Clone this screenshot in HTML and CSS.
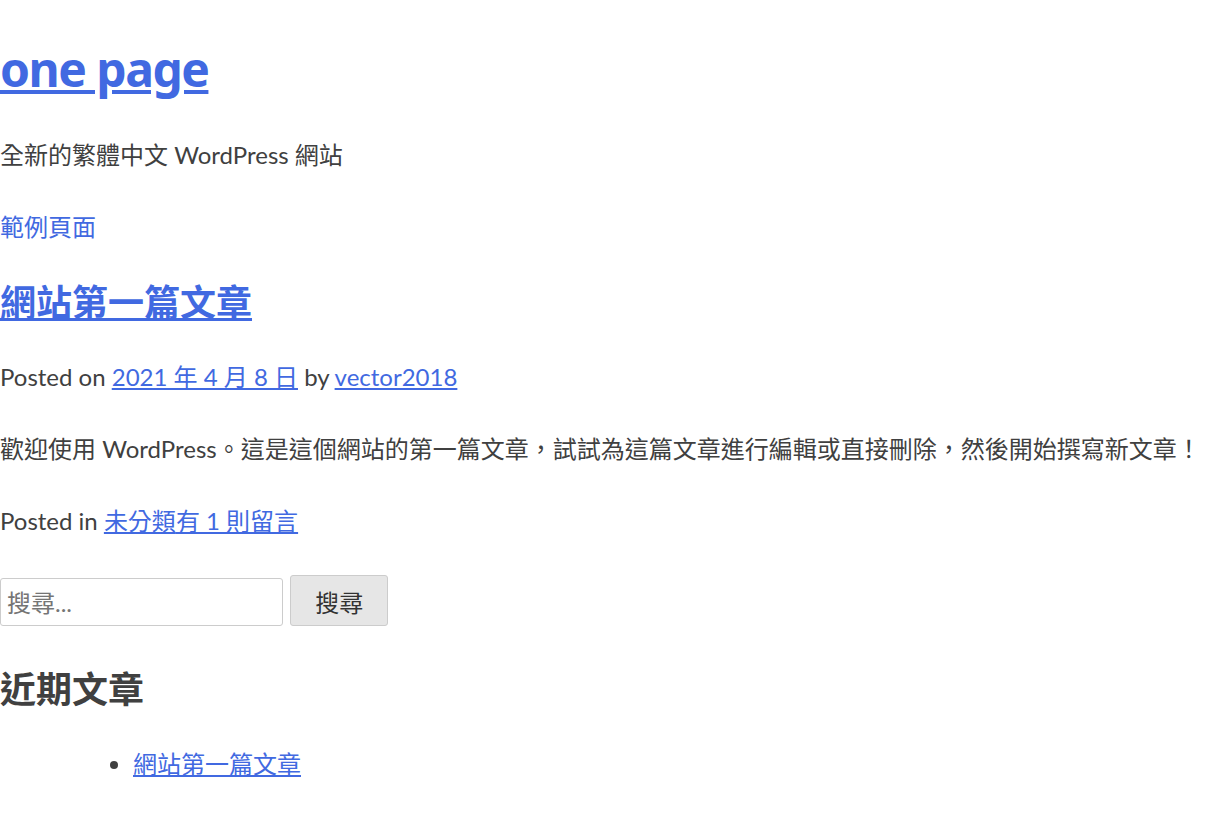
FILE: index.html
```html
<!DOCTYPE html>
<html lang="zh-TW">
<head>
<meta charset="utf-8">
<title>one page</title>
<link rel="stylesheet" href="styles.css">
</head>
<body>
<div class="site">
  <header class="site-header">
    <div class="site-branding">
      <h1 class="site-title"><a href="#">one page</a></h1>
      <p class="site-description">全新的繁體中文 WordPress 網站</p>
    </div>
    <nav class="main-navigation">
      <ul class="menu">
        <li><a href="#">範例頁面</a></li>
      </ul>
    </nav>
  </header>
  <main class="site-main">
    <article class="post">
      <header class="entry-header">
        <h2 class="entry-title"><a href="#">網站第一篇文章</a></h2>
        <div class="entry-meta">Posted on <a href="#">2021 年 4 月 8 日</a> by <a href="#">vector2018</a></div>
      </header>
      <div class="entry-content">
        <p>歡迎使用 WordPress。這是這個網站的第一篇文章，試試為這篇文章進行編輯或直接刪除，然後開始撰寫新文章！</p>
      </div>
      <footer class="entry-footer">Posted in <a href="#">未分類</a><a href="#">有 1 則留言</a></footer>
    </article>
  </main>
  <aside class="widget-area">
    <section class="widget">
      <form class="search-form">
        <input class="search-field" type="search" placeholder="搜尋...">
        <button class="search-submit" type="button">搜尋</button>
      </form>
    </section>
    <section class="widget">
      <h2 class="widget-title">近期文章</h2>
      <ul class="recent-list">
        <li><a href="#">網站第一篇文章</a></li>
      </ul>
    </section>
  </aside>
</div>
</body>
</html>
```

FILE: styles.css
```css
html {
  font-size: 24px;
}
body {
  margin: 0;
  color: #404040;
  font-family: "Lato", "Noto Sans CJK TC", sans-serif;
  font-size: 1rem;
  line-height: 1.5;
  background: #fff;
}
a {
  color: #4169e1;
}
.site-title {
  font-family: "Noto Sans", "Noto Sans CJK TC", sans-serif;
  font-size: 2em;
  font-weight: 700;
  letter-spacing: -1.5px;
  line-height: 64px;
  margin: 37px 0 36px;
}
.site-description {
  margin: 1.5em 0;
}
.main-navigation .menu {
  list-style: none;
  margin: 0;
  padding: 0;
  display: flex;
}
.main-navigation a {
  text-decoration: none;
}
.entry-title,
.widget-title {
  font-size: 1.5em;
  font-weight: 700;
  line-height: 1.5;
  margin: 0.83em 0;
}
.entry-content p {
  margin: 1.5em 0;
}
.post {
  margin: 0 0 1.5em;
}
.widget {
  margin: 0 0 1.5em;
}
.search-form {
  margin: 0;
}
.search-field {
  font-family: inherit;
  font-size: 1rem;
  color: #666;
  width: 283px;
  height: 48px;
  box-sizing: border-box;
  padding: 3px 6px;
  border: 1px solid #ccc;
  border-radius: 3px;
  margin: 0;
  vertical-align: baseline;
}
.search-field::placeholder {
  color: #757575;
}
.search-submit {
  font-family: inherit;
  font-size: 1rem;
  color: rgba(0, 0, 0, 0.8);
  background: #e6e6e6;
  border: 1px solid #ccc;
  border-radius: 3px;
  line-height: 1;
  padding: 0.6em 1em 0.4em;
  margin: 0 0 0 1px;
  width: 98px;
  height: 51px;
  box-sizing: border-box;
}
.recent-list {
  margin: 0 0 1.5em;
  padding-left: 133px;
}
```
